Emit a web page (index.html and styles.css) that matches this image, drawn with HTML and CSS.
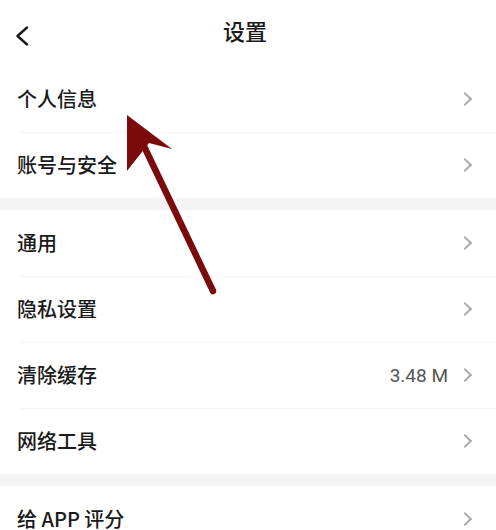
FILE: index.html
```html
<!DOCTYPE html>
<html lang="zh-CN">
<head>
<meta charset="utf-8">
<title>设置</title>
<link rel="stylesheet" href="styles.css">
</head>
<body>
<div class="page">
  <header class="topbar">
    <svg class="back" width="14" height="20" viewBox="0 0 14 20"><path d="M12 1.5 L2.5 10 L12 18.5" fill="none" stroke="#1a1a1a" stroke-width="2.4" stroke-linecap="round" stroke-linejoin="round"/></svg>
    <h1 class="title">设置</h1>
  </header>

  <section class="group">
    <div class="row"><span class="label">个人信息</span><span class="chev"></span></div>
    <div class="row"><span class="label">账号与安全</span><span class="chev"></span></div>
  </section>
  <div class="gap"></div>
  <section class="group">
    <div class="row"><span class="label">通用</span><span class="chev"></span></div>
    <div class="row"><span class="label">隐私设置</span><span class="chev"></span></div>
    <div class="row"><span class="label">清除缓存</span><span class="value">3.48 M</span><span class="chev"></span></div>
    <div class="row"><span class="label">网络工具</span><span class="chev"></span></div>
  </section>
  <div class="gap"></div>
  <section class="group">
    <div class="row"><span class="label">给 APP 评分</span><span class="chev"></span></div>
  </section>

  <svg class="arrow" width="496" height="530" viewBox="0 0 496 530">
    <line x1="142" y1="142" x2="213" y2="291" stroke="#7b0a0c" stroke-width="6.5" stroke-linecap="round"/>
    <polygon points="127,115 172,149 149,143 127,171" fill="#7b0a0c"/>
  </svg>
</div>
</body>
</html>
```

FILE: styles.css
```css
* { box-sizing: border-box; margin: 0; padding: 0; }
html, body { background: #fff; }
body {
  font-family: "Noto Sans CJK SC", "Noto Sans", sans-serif;
  color: #1a1a1a;
  width: 496px;
  height: 530px;
  overflow: hidden;
}
.page { position: relative; width: 496px; height: 530px; overflow: hidden; }
.topbar {
  height: 66px;
  display: flex;
  align-items: center;
  justify-content: center;
  position: relative;
}
.back { position: absolute; left: 15px; top: 26px; }
.title { font-size: 22px; font-weight: 500; line-height: 1; margin-top: -6px; margin-right: 6px; color: #1a1a1a; }
.group { display: flex; flex-direction: column; }
.row {
  height: 66px;
  display: flex;
  align-items: center;
  padding: 0 22px 0 17px;
  position: relative;
}
.row + .row::before {
  content: "";
  position: absolute;
  left: 20px; right: 0; top: 0;
  height: 1px;
  background: #f7f7f7;
}
.label { flex: 1; font-size: 20px; font-weight: 500; line-height: 1; }
.value { font-size: 19px; color: #555; font-family: "Roboto", "Noto Sans", sans-serif; margin-right: 12px; }
.chev {
  width: 10px; height: 10px;
  border-top: 2px solid #ababab;
  border-right: 2px solid #ababab;
  transform: rotate(45deg);
  margin-right: 4px;
}
.gap { height: 12px; background: #f4f4f4; }
.arrow { position: absolute; left: 0; top: 0; pointer-events: none; }
```
